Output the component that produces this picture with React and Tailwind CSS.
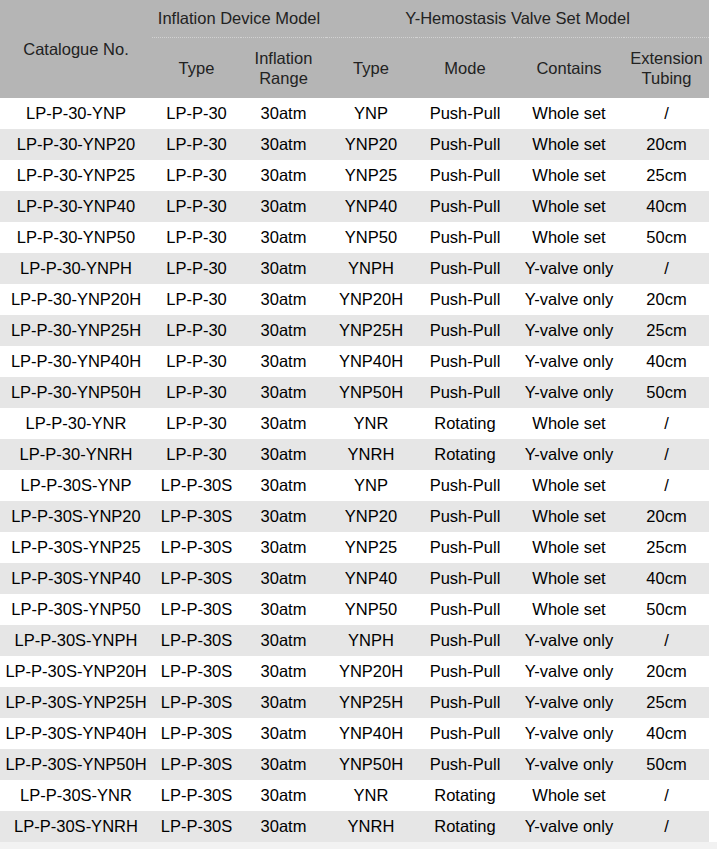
import React from "react";

const rows = [
  ["LP-P-30-YNP", "LP-P-30", "30atm", "YNP", "Push-Pull", "Whole set", "/"],
  ["LP-P-30-YNP20", "LP-P-30", "30atm", "YNP20", "Push-Pull", "Whole set", "20cm"],
  ["LP-P-30-YNP25", "LP-P-30", "30atm", "YNP25", "Push-Pull", "Whole set", "25cm"],
  ["LP-P-30-YNP40", "LP-P-30", "30atm", "YNP40", "Push-Pull", "Whole set", "40cm"],
  ["LP-P-30-YNP50", "LP-P-30", "30atm", "YNP50", "Push-Pull", "Whole set", "50cm"],
  ["LP-P-30-YNPH", "LP-P-30", "30atm", "YNPH", "Push-Pull", "Y-valve only", "/"],
  ["LP-P-30-YNP20H", "LP-P-30", "30atm", "YNP20H", "Push-Pull", "Y-valve only", "20cm"],
  ["LP-P-30-YNP25H", "LP-P-30", "30atm", "YNP25H", "Push-Pull", "Y-valve only", "25cm"],
  ["LP-P-30-YNP40H", "LP-P-30", "30atm", "YNP40H", "Push-Pull", "Y-valve only", "40cm"],
  ["LP-P-30-YNP50H", "LP-P-30", "30atm", "YNP50H", "Push-Pull", "Y-valve only", "50cm"],
  ["LP-P-30-YNR", "LP-P-30", "30atm", "YNR", "Rotating", "Whole set", "/"],
  ["LP-P-30-YNRH", "LP-P-30", "30atm", "YNRH", "Rotating", "Y-valve only", "/"],
  ["LP-P-30S-YNP", "LP-P-30S", "30atm", "YNP", "Push-Pull", "Whole set", "/"],
  ["LP-P-30S-YNP20", "LP-P-30S", "30atm", "YNP20", "Push-Pull", "Whole set", "20cm"],
  ["LP-P-30S-YNP25", "LP-P-30S", "30atm", "YNP25", "Push-Pull", "Whole set", "25cm"],
  ["LP-P-30S-YNP40", "LP-P-30S", "30atm", "YNP40", "Push-Pull", "Whole set", "40cm"],
  ["LP-P-30S-YNP50", "LP-P-30S", "30atm", "YNP50", "Push-Pull", "Whole set", "50cm"],
  ["LP-P-30S-YNPH", "LP-P-30S", "30atm", "YNPH", "Push-Pull", "Y-valve only", "/"],
  ["LP-P-30S-YNP20H", "LP-P-30S", "30atm", "YNP20H", "Push-Pull", "Y-valve only", "20cm"],
  ["LP-P-30S-YNP25H", "LP-P-30S", "30atm", "YNP25H", "Push-Pull", "Y-valve only", "25cm"],
  ["LP-P-30S-YNP40H", "LP-P-30S", "30atm", "YNP40H", "Push-Pull", "Y-valve only", "40cm"],
  ["LP-P-30S-YNP50H", "LP-P-30S", "30atm", "YNP50H", "Push-Pull", "Y-valve only", "50cm"],
  ["LP-P-30S-YNR", "LP-P-30S", "30atm", "YNR", "Rotating", "Whole set", "/"],
  ["LP-P-30S-YNRH", "LP-P-30S", "30atm", "YNRH", "Rotating", "Y-valve only", "/"],
];

export default function App() {
  return (
    <div className="bg-white w-[717px] h-[849px] overflow-hidden font-['Liberation_Sans',Arial,sans-serif] text-[16.5px]">
      <table className="w-[709px] table-fixed border-collapse text-center">
        <colgroup>
          <col className="w-[152px]" />
          <col className="w-[89px]" />
          <col className="w-[85px]" />
          <col className="w-[90px]" />
          <col className="w-[98px]" />
          <col className="w-[110px]" />
          <col className="w-[85px]" />
        </colgroup>
        <thead className="bg-[#b5b5b5] text-[#222] font-normal">
          <tr className="h-[37px]">
            <th rowSpan={2} className="font-normal p-0">
              Catalogue No.
            </th>
            <th
              colSpan={2}
              className="font-normal p-0 border-b border-dotted border-[#d2d2d2]"
            >
              Inflation Device Model
            </th>
            <th
              colSpan={4}
              className="font-normal p-0 border-b border-dotted border-[#d2d2d2]"
            >
              Y-Hemostasis Valve Set Model
            </th>
          </tr>
          <tr className="h-[61px] leading-[20px]">
            <th className="font-normal p-0">Type</th>
            <th className="font-normal p-0">
              Inflation
              <br />
              Range
            </th>
            <th className="font-normal p-0">Type</th>
            <th className="font-normal p-0">Mode</th>
            <th className="font-normal p-0">Contains</th>
            <th className="font-normal p-0">
              Extension
              <br />
              Tubing
            </th>
          </tr>
        </thead>
        <tbody className="text-black">
          {rows.map((row, i) => (
            <tr
              key={row[0]}
              className={`h-[31px] ${i % 2 === 1 ? "bg-[#e6e6e6]" : "bg-white"}`}
            >
              {row.map((cell, j) => (
                <td key={j} className="p-0 whitespace-nowrap">
                  {cell}
                </td>
              ))}
            </tr>
          ))}
        </tbody>
      </table>
      <div className="h-[7px] bg-[#f2f2f2]" />
    </div>
  );
}
